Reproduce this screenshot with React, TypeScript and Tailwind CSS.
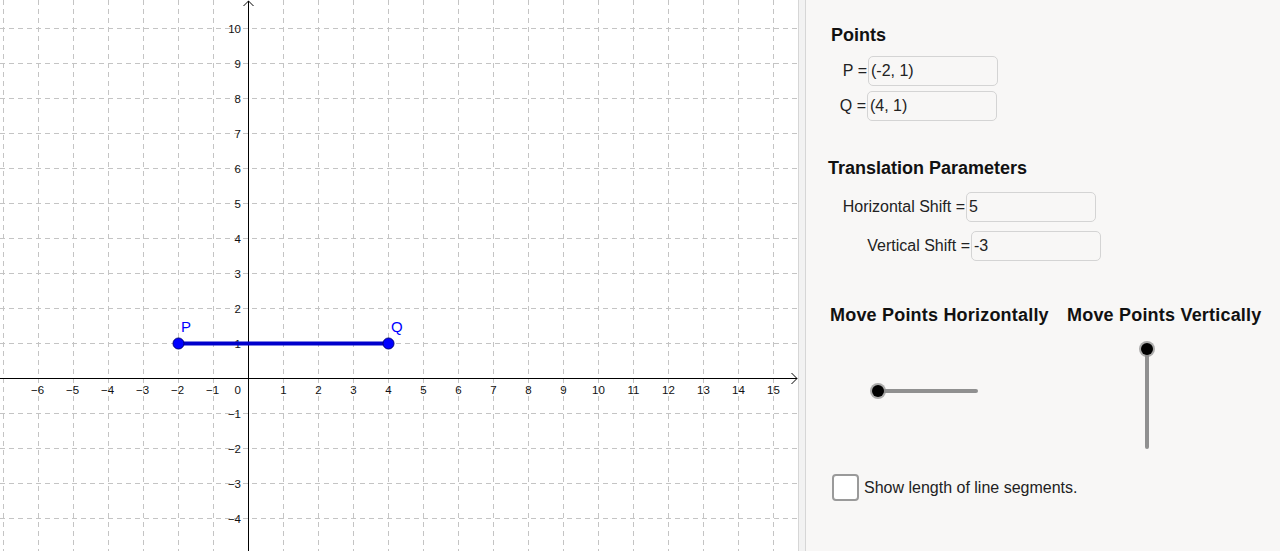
import React from 'react';

const UNIT = 35;
const OX = 248.5;
const OY = 378.5;

const xs = Array.from({ length: 23 }, (_, i) => i - 7); // -7..15
const ys = Array.from({ length: 15 }, (_, i) => i - 4); // -4..10

const fmt = (n: number) => (n < 0 ? `\u2212${-n}` : `${n}`);

function Graphics() {
  const px = (x: number) => OX + x * UNIT;
  const py = (y: number) => OY - y * UNIT;
  return (
    <svg width="798" height="551" className="block" style={{ fontFamily: '"Liberation Sans", Arial, sans-serif' }}>
      <rect width="798" height="551" fill="#ffffff" />
      {/* grid */}
      <g stroke="#c4c4c4" strokeWidth="1" strokeDasharray="5 4">
        {xs.map(x => (
          <line key={`gx${x}`} x1={px(x)} y1={0} x2={px(x)} y2={551} />
        ))}
        {ys.map(y => (
          <line key={`gy${y}`} x1={0} y1={py(y)} x2={798} y2={py(y)} />
        ))}
      </g>
      {/* axes */}
      <g stroke="#000" strokeWidth="1" fill="none">
        <line x1={0} y1={OY} x2={797} y2={OY} />
        <polyline points={`791.5,373 797,378.5 791.5,384`} />
        <line x1={OX} y1={1} x2={OX} y2={551} />
        <polyline points={`243.5,6 248.5,1 253.5,6`} />
      </g>
      {/* labels */}
      <g fontSize="11.5" fill="#111">
        {xs.filter(x => x >= -6 && x !== 0).map(x => (
          <text key={`lx${x}`} x={px(x) + (x < 0 ? -1 : 0)} y={394} textAnchor="middle">
            {fmt(x)}
          </text>
        ))}
        <text x={241} y={394} textAnchor="end">0</text>
        {ys.filter(y => y !== 0).map(y => (
          <text key={`ly${y}`} x={241} y={py(y) + 4} textAnchor="end">
            {fmt(y)}
          </text>
        ))}
      </g>
      {/* segment PQ */}
      <line x1={px(-2)} y1={py(1)} x2={px(4)} y2={py(1)} stroke="#0000cc" strokeWidth="4" />
      <circle cx={px(-2)} cy={py(1)} r="5.5" fill="#0000ff" stroke="#00007a" strokeWidth="1" />
      <circle cx={px(4)} cy={py(1)} r="5.5" fill="#0000ff" stroke="#00007a" strokeWidth="1" />
      <g fontSize="15" fill="#0000ff">
        <text x={181} y={332}>P</text>
        <text x={391} y={332}>Q</text>
      </g>
    </svg>
  );
}

function InputRow({ label, value, offset, width = 130 }: { label: string; value: string; offset: number; width?: number }) {
  return (
    <div className="flex items-center">
      <div className="text-right text-[16px] text-[#222] pr-[1px]" style={{ width: offset }}>
        {label}
      </div>
      <div
        className="h-[30px] rounded-[5px] border border-[#d4d4d4] bg-[#f8f7f6] pl-[2px] flex items-center text-[16px] text-[#222]"
        style={{ width }}
      >
        {value}
      </div>
    </div>
  );
}

function HSlider() {
  return (
    <svg width="120" height="24" className="block">
      <line x1={10} y1={12} x2={108} y2={12} stroke="#909090" strokeWidth="4" strokeLinecap="round" />
      <circle cx={10} cy={12} r="8" fill="#8a8a8a" opacity="0.7" />
      <circle cx={10} cy={12} r="6" fill="#000" />
    </svg>
  );
}

function VSlider() {
  return (
    <svg width="24" height="120" className="block">
      <line x1={12} y1={10} x2={12} y2={108} stroke="#909090" strokeWidth="4" strokeLinecap="round" />
      <circle cx={12} cy={10} r="8" fill="#8a8a8a" opacity="0.7" />
      <circle cx={12} cy={10} r="6" fill="#000" />
    </svg>
  );
}

export default function App() {
  return (
    <div
      className="w-[1280px] h-[551px] flex overflow-hidden bg-white"
      style={{ fontFamily: '"Liberation Sans", Arial, sans-serif' }}
    >
      <Graphics />
      {/* splitter */}
      <div className="w-[8px] h-full border-l border-r border-[#d6d6d6] bg-[#f2f2f2]" />
      {/* algebra / controls panel */}
      <div className="flex-1 h-full bg-[#f8f7f6] flex flex-col">
        <div className="mt-[24px] ml-[25px] text-[18px] leading-[22px] font-bold text-[#111]">Points</div>
        <div className="mt-[10px] flex flex-col gap-[5px]">
          <InputRow label="P =" value="(-2, 1)" offset={62} />
          <InputRow label="Q =" value="(4, 1)" offset={61} />
        </div>
        <div className="mt-[36px] ml-[22px] text-[18px] leading-[22px] font-bold text-[#111]">Translation Parameters</div>
        <div className="mt-[13px] flex flex-col gap-[9px]">
          <InputRow label="Horizontal Shift =" value="5" offset={160} />
          <InputRow label="Vertical Shift =" value="-3" offset={165} />
        </div>
        <div className="mt-[43px] ml-[24px] flex text-[18px] leading-[22px] font-bold text-[#111] tracking-[0.2px]">
          <div className="w-[237px] flex flex-col">
            <span>Move Points Horizontally</span>
            <div className="mt-[53px] ml-[38px]">
              <HSlider />
            </div>
          </div>
          <div className="flex flex-col">
            <span>Move Points Vertically</span>
            <div className="mt-[13px] ml-[68px]">
              <VSlider />
            </div>
          </div>
        </div>
        <div className="mt-[15px] ml-[26px] flex items-center">
          <div className="w-[27px] h-[27px] rounded-[4px] border-2 border-[#9a9a9a] bg-white" />
          <span className="ml-[5px] text-[16px] text-[#222]">Show length of line segments.</span>
        </div>
      </div>
    </div>
  );
}
